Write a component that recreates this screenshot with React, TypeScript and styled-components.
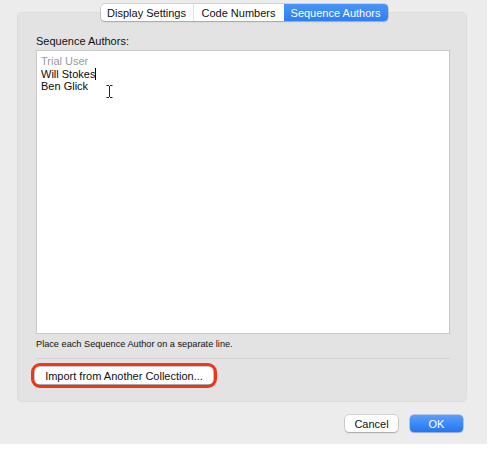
import React from "react";
import styled, { createGlobalStyle } from "styled-components";

const GlobalStyle = createGlobalStyle`
  body {
    margin: 0;
    background: #ffffff;
    font-family: "Liberation Sans", Arial, sans-serif;
    color: #1a1a1a;
  }
`;

const Window = styled.div`
  width: 487px;
  height: 444px;
  background: #ececec;
  display: flex;
  flex-direction: column;
  box-sizing: border-box;
  padding-top: 4px;
`;

const TabBar = styled.div`
  display: flex;
  justify-content: center;
  position: relative;
  z-index: 1;
  padding-left: 1px;
`;

const Segmented = styled.div`
  display: inline-flex;
  height: 17px;
  background: #ffffff;
  border-radius: 4px;
  box-shadow: 0 0 0 0.5px rgba(0, 0, 0, 0.22), 0 1px 1.5px rgba(0, 0, 0, 0.18);
  overflow: hidden;
`;

const Tab = styled.div<{ $active?: boolean; $w: number }>`
  width: ${(p) => p.$w}px;
  display: flex;
  align-items: center;
  justify-content: center;
  font-size: 11px;
  color: ${(p) => (p.$active ? "#ffffff" : "#111111")};
  background: ${(p) =>
    p.$active ? "linear-gradient(#4795f8, #2f7ef4)" : "transparent"};
  border-left: ${(p) => (p.$active ? "none" : "1px solid #e2e2e2")};
  &:first-child {
    border-left: none;
  }
`;

const Panel = styled.div`
  margin: -9px 0 0 17px;
  width: 450px;
  height: 390px;
  box-sizing: border-box;
  background: #e3e3e3;
  border: 1px solid #dcdcdc;
  border-radius: 5px;
  padding: 22px 16px 0 18px;
  display: flex;
  flex-direction: column;
`;

const Label = styled.div`
  font-size: 11px;
  line-height: 13px;
  margin-bottom: 2px;
  color: #111111;
`;

const TextBox = styled.div`
  position: relative;
  height: 284px;
  box-sizing: border-box;
  background: #ffffff;
  border: 1px solid #c8c8c8;
  padding: 4px 4px;
  font-size: 11px;
  line-height: 12.5px;
`;

const Line = styled.div<{ $muted?: boolean }>`
  color: ${(p) => (p.$muted ? "#9a9a9a" : "#0c0c0c")};
  white-space: nowrap;
`;

const Caret = styled.span`
  display: inline-block;
  width: 1px;
  height: 12px;
  background: #000;
  vertical-align: -2px;
`;

const IBeam = styled.svg`
  position: absolute;
  left: 69px;
  top: 34px;
`;

const Hint = styled.div`
  font-size: 9.2px;
  line-height: 12px;
  margin-top: 4px;
  color: #111111;
`;

const Separator = styled.div`
  height: 1px;
  background: #d2d2d2;
  margin-top: 8px;
`;

const Highlight = styled.div`
  align-self: flex-start;
  margin: 4px 0 0 -5px;
  padding: 1px;
  border: 3px solid #f0371a;
  border-radius: 9px;
  display: flex;
`;

const PushButton = styled.div<{ $w: number; $primary?: boolean }>`
  width: ${(p) => p.$w}px;
  height: 17px;
  border-radius: 4px;
  display: flex;
  align-items: center;
  justify-content: center;
  font-size: 11px;
  color: ${(p) => (p.$primary ? "#ffffff" : "#111111")};
  background: ${(p) =>
    p.$primary ? "linear-gradient(#5a9ef9, #2376f2)" : "#ffffff"};
  box-shadow: ${(p) =>
    p.$primary
      ? "0 0 0 0.5px rgba(20, 90, 220, 0.5), 0 1px 1px rgba(0, 0, 0, 0.15)"
      : "0 0 0 0.5px rgba(0, 0, 0, 0.22), 0 1px 1.5px rgba(0, 0, 0, 0.2)"};
`;

const Footer = styled.div`
  display: flex;
  justify-content: flex-end;
  gap: 12px;
  margin-top: 13px;
  padding-right: 24px;
`;

export default function App() {
  return (
    <>
      <GlobalStyle />
      <Window>
        <TabBar>
          <Segmented>
            <Tab $w={92}>Display Settings</Tab>
            <Tab $w={90}>Code Numbers</Tab>
            <Tab $w={104} $active>
              Sequence Authors
            </Tab>
          </Segmented>
        </TabBar>
        <Panel>
          <Label>Sequence Authors:</Label>
          <TextBox>
            <Line $muted>Trial User</Line>
            <Line>
              Will Stokes
              <Caret />
            </Line>
            <Line>Ben Glick</Line>
            <IBeam width="7" height="13" viewBox="0 0 7 13">
              <path
                d="M0.5 0.5h2.5M4 0.5h2.5M3.5 1v11M0.5 12.5h2.5M4 12.5h2.5"
                stroke="#222"
                strokeWidth="1"
                fill="none"
              />
            </IBeam>
          </TextBox>
          <Hint>Place each Sequence Author on a separate line.</Hint>
          <Separator />
          <Highlight>
            <PushButton $w={178}>Import from Another Collection...</PushButton>
          </Highlight>
        </Panel>
        <Footer>
          <PushButton $w={53}>Cancel</PushButton>
          <PushButton $w={53} $primary>
            OK
          </PushButton>
        </Footer>
      </Window>
    </>
  );
}
